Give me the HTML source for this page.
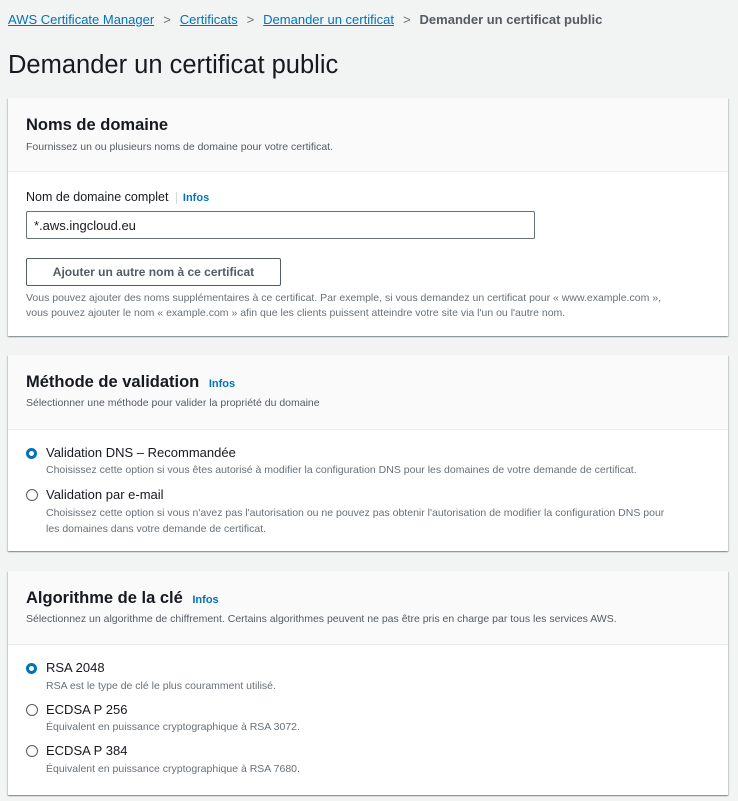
<!DOCTYPE html>
<html><head><meta charset="utf-8"><style>
body{margin:0;background:#f2f3f3;font-family:"Liberation Sans","DejaVu Sans",sans-serif;color:#16191f;width:738px;height:801px;overflow:hidden;position:relative}
.a{position:absolute;white-space:nowrap}
.bc{top:12px;left:8px;font-size:13px;color:#545b64}
.bc a{color:#0073bb;text-decoration:underline}
.sep{display:inline-block;margin:0 9px;color:#687078}
h1{position:absolute;top:51px;left:8px;margin:0;font-size:25.5px;font-weight:400}
.card{position:absolute;left:8px;width:720px;background:#fff;box-shadow:0 1px 1px rgba(0,28,36,.3),1px 1px 1px rgba(0,28,36,.15),-1px 1px 1px rgba(0,28,36,.15)}
.hd{background:#fafafa;border-bottom:1px solid #eaeded;position:relative}
.t{position:absolute;left:18px;font-size:16.5px;font-weight:700}
.d{position:absolute;left:18px;font-size:10.5px;color:#545b64}
.i{font-size:11px;color:#0073bb;font-weight:700;margin-left:5px}
.s{font-size:10.5px;color:#687078}
.r{position:absolute;left:18px;width:10px;height:10px;border-radius:50%;border:1px solid #545b64;background:#fff}
.r.on{border:3.5px solid #0073bb;width:5px;height:5px}
.l{position:absolute;left:38px;font-size:13px}
</style></head><body>
<div class="a bc"><a>AWS Certificate Manager</a><span class="sep">&gt;</span><a>Certificats</a><span class="sep">&gt;</span><a>Demander un certificat</a><span class="sep">&gt;</span><b style="color:#545b64">Demander un certificat public</b></div>
<h1>Demander un certificat public</h1>

<div class="card" style="top:98px;height:238px">
<div class="hd" style="height:73px"><div class="a t" style="top:18px">Noms de domaine</div><div class="a d" style="top:43px">Fournissez un ou plusieurs noms de domaine pour votre certificat.</div></div>
<div class="a" style="top:92px;left:18px;font-size:12.5px">Nom de domaine complet <span style="border-left:1px solid #d5dbdb;margin-left:4px;padding-left:6px" class="i">Infos</span></div>
<div class="a" style="top:113px;left:18px;width:509px;height:28px;border:1px solid #687078;border-radius:2px;box-sizing:border-box;font-size:13px;padding:6px 7px">*.aws.ingcloud.eu</div>
<div class="a" style="top:160px;left:18px;width:255px;height:28px;border:1px solid #545b64;border-radius:2px;box-sizing:border-box;font-size:12px;font-weight:700;color:#545b64;text-align:center;line-height:26px">Ajouter un autre nom à ce certificat</div>
<div class="a s" style="top:193px;left:18px;line-height:15px">Vous pouvez ajouter des noms supplémentaires à ce certificat. Par exemple, si vous demandez un certificat pour « www.example.com »,<br>vous pouvez ajouter le nom « example.com » afin que les clients puissent atteindre votre site via l'un ou l'autre nom.</div>
</div>

<div class="card" style="top:355px;height:196px">
<div class="hd" style="height:74px"><div class="a t" style="top:18px">Méthode de validation <span class="i">Infos</span></div><div class="a d" style="top:42px">Sélectionner une méthode pour valider la propriété du domaine</div></div>
<div class="r on" style="top:93px"></div><div class="a l" style="top:90px">Validation DNS – Recommandée</div>
<div class="a s" style="top:109px;left:38px">Choisissez cette option si vous êtes autorisé à modifier la configuration DNS pour les domaines de votre demande de certificat.</div>
<div class="r" style="top:134px"></div><div class="a l" style="top:132px">Validation par e-mail</div>
<div class="a s" style="top:150px;left:38px;line-height:16px">Choisissez cette option si vous n'avez pas l'autorisation ou ne pouvez pas obtenir l'autorisation de modifier la configuration DNS pour<br>les domaines dans votre demande de certificat.</div>
</div>

<div class="card" style="top:571px;height:224px">
<div class="hd" style="height:73px"><div class="a t" style="top:18px">Algorithme de la clé <span class="i">Infos</span></div><div class="a d" style="top:42px">Sélectionnez un algorithme de chiffrement. Certains algorithmes peuvent ne pas être pris en charge par tous les services AWS.</div></div>
<div class="r on" style="top:92px"></div><div class="a l" style="top:89px">RSA 2048</div>
<div class="a s" style="top:109px;left:38px">RSA est le type de clé le plus couramment utilisé.</div>
<div class="r" style="top:133px"></div><div class="a l" style="top:131px">ECDSA P 256</div>
<div class="a s" style="top:150px;left:38px">Équivalent en puissance cryptographique à RSA 3072.</div>
<div class="r" style="top:174px"></div><div class="a l" style="top:172px">ECDSA P 384</div>
<div class="a s" style="top:192px;left:38px">Équivalent en puissance cryptographique à RSA 7680.</div>
</div>
</body></html>
